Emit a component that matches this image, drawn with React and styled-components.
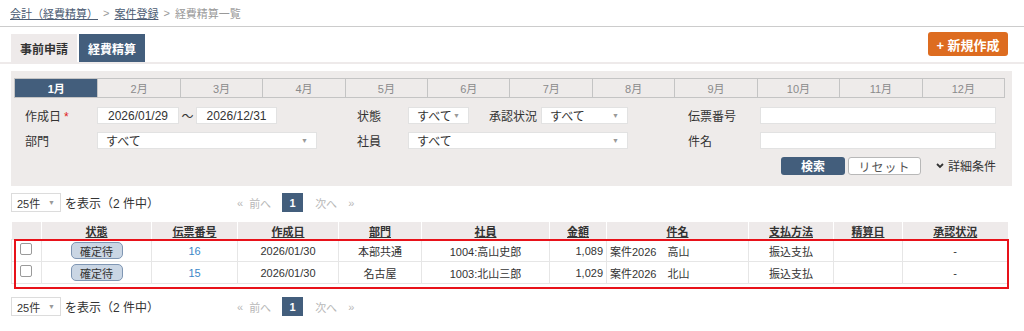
import styled, { createGlobalStyle } from "styled-components";

const GlobalStyle = createGlobalStyle`
  body {
    margin: 0;
    background: #ffffff;
    font-family: "Liberation Sans", "Noto Sans CJK JP", sans-serif;
    font-size: 12px;
    color: #333333;
  }
`;

const Page = styled.div`
  width: 1024px;
`;

const Breadcrumb = styled.div`
  height: 26px;
  padding: 0 10px;
  display: flex;
  align-items: center;
  gap: 5px;
  font-size: 11px;
  color: #999999;
  border-bottom: 1px solid #cccccc;
`;

const Crumb = styled.a`
  color: #4c5c73;
  text-decoration: underline;
`;

const TabBar = styled.div`
  margin-top: 7px;
  padding: 0 16px 0 11px;
  display: flex;
  align-items: flex-end;
  height: 28px;
  border-bottom: 2px solid #eeeaea;
`;

const Tab = styled.div`
  width: 66px;
  height: 28px;
  margin-right: 2px;
  display: flex;
  align-items: center;
  justify-content: center;
  font-weight: bold;
  font-size: 12px;
  background: ${(p) => (p.$active ? "#435e7c" : "#eeeaea")};
  color: ${(p) => (p.$active ? "#ffffff" : "#333333")};
`;

const NewButton = styled.button`
  margin-left: auto;
  align-self: flex-start;
  margin-top: -2px;
  width: 80px;
  height: 24px;
  border: none;
  border-radius: 3px;
  background: #dd6c20;
  color: #ffffff;
  font-weight: bold;
  font-size: 13px;
  font-family: inherit;
`;

const Panel = styled.div`
  margin: 7px 12px 0 11px;
  background: #eeebea;
  padding: 7px 7px 12px 3px;
`;

const MonthRow = styled.div`
  display: grid;
  grid-template-columns: repeat(12, 1fr);
  border: 1px solid #c4c4c4;
  height: 18px;
`;

const Month = styled.div`
  display: flex;
  align-items: center;
  justify-content: center;
  font-size: 11px;
  border-left: ${(p) => (p.$first ? "none" : "1px solid #c4c4c4")};
  background: ${(p) => (p.$active ? "#435e7c" : "transparent")};
  color: ${(p) => (p.$active ? "#ffffff" : "#8a8a8a")};
  font-weight: ${(p) => (p.$active ? "bold" : "normal")};
`;

const FormGrid = styled.div`
  margin-top: 9px;
  padding-left: 11px;
  display: grid;
  grid-template-columns: 72px 260px 51px 220px 60px 72px 236px;
  grid-auto-rows: 17px;
  row-gap: 8px;
  align-items: center;
`;

const Label = styled.div`
  font-size: 12px;
  color: #333333;
`;

const Required = styled.span`
  color: #e02020;
  margin-left: 3px;
`;

const Field = styled.div`
  display: flex;
  align-items: center;
`;

const Input = styled.div`
  box-sizing: border-box;
  width: ${(p) => p.$w}px;
  height: 17px;
  background: #ffffff;
  border: 1px solid #e2e2e2;
  display: flex;
  align-items: center;
  justify-content: center;
  font-size: 12px;
  color: #333333;
`;

const Tilde = styled.span`
  width: 17px;
  text-align: center;
  font-size: 12px;
`;

const Select = styled.div`
  box-sizing: border-box;
  width: ${(p) => p.$w}px;
  height: 17px;
  background: #ffffff;
  border: 1px solid #e2e2e2;
  display: flex;
  align-items: center;
  padding: 0 8px;
  font-size: 12px;
  color: #333333;
  &::after {
    content: "▼";
    margin-left: auto;
    font-size: 7px;
    color: #999999;
  }
`;

const InlineLabel = styled(Label)`
  margin: 0 0 0 20px;
  width: 52px;
`;

const ActionRow = styled.div`
  grid-column: 1 / -1;
  display: flex;
  align-items: center;
  justify-content: flex-end;
`;

const SearchButton = styled.button`
  width: 64px;
  height: 18px;
  border: none;
  border-radius: 3px;
  background: #435e7c;
  color: #ffffff;
  font-weight: bold;
  font-size: 12px;
  font-family: inherit;
  padding: 0;
`;

const ResetButton = styled.button`
  margin-left: 3px;
  width: 73px;
  height: 18px;
  border: 1px solid #b8b8b8;
  border-radius: 3px;
  background: #ffffff;
  color: #555555;
  font-size: 12px;
  font-family: inherit;
  letter-spacing: 1px;
  padding: 0;
`;

const Detail = styled.div`
  margin-left: 15px;
  display: flex;
  align-items: center;
  gap: 4px;
  font-size: 12px;
  color: #333333;
`;

const Pager = styled.div`
  display: grid;
  grid-template-columns: 226px auto;
  align-items: center;
  padding-left: 11px;
  height: 19px;
  margin-top: ${(p) => p.$top}px;
`;

const PageSize = styled.div`
  display: flex;
  align-items: center;
  gap: 4px;
  font-size: 12px;
`;

const SizeSelect = styled.div`
  box-sizing: border-box;
  width: 50px;
  height: 19px;
  border: 1px solid #dcdcdc;
  display: flex;
  align-items: center;
  padding: 0 5px;
  font-size: 11px;
  &::after {
    content: "▼";
    margin-left: auto;
    font-size: 7px;
    color: #999999;
  }
`;

const PageLinks = styled.div`
  display: flex;
  align-items: center;
  font-size: 11px;
  color: #b8b8b8;
`;

const PageLink = styled.span`
  margin-right: ${(p) => p.$gap}px;
`;

const PageNum = styled.span`
  width: 21px;
  height: 19px;
  display: flex;
  align-items: center;
  justify-content: center;
  background: #435e7c;
  color: #ffffff;
  font-weight: bold;
  margin-right: 12px;
`;

const TableWrap = styled.div`
  position: relative;
  margin: 10px 0 0 11px;
  width: 996px;
`;

const Table = styled.table`
  border-collapse: collapse;
  width: 996px;
  table-layout: fixed;
  font-size: 11px;
`;

const Th = styled.th`
  height: 17px;
  padding: 0;
  background: #eeeaea;
  border-left: 1px solid #ffffff;
  font-weight: bold;
  text-decoration: underline;
  color: #333333;
  &:first-child {
    border-left: none;
  }
`;

const Td = styled.td`
  height: 21px;
  padding: 0 3px;
  border: 1px solid #e6e6e6;
  text-align: ${(p) => p.$align || "center"};
  color: ${(p) => (p.$link ? "#3a87c8" : "#333333")};
  vertical-align: middle;
`;

const Check = styled.span`
  display: block;
  width: 10px;
  height: 10px;
  border: 1px solid #9a9a9a;
  border-radius: 2px;
  background: #ffffff;
  margin: -4px 0 0 5px;
`;

const Badge = styled.span`
  display: inline-flex;
  align-items: center;
  justify-content: center;
  width: 50px;
  height: 15px;
  border: 1px solid #7f96b3;
  border-radius: 5px;
  background: #cad6e4;
  color: #333333;
  font-size: 11px;
`;

const Highlight = styled.div`
  position: absolute;
  left: 3px;
  top: 17px;
  width: 995px;
  height: 50px;
  box-sizing: border-box;
  border: 2px solid #e8121a;
  pointer-events: none;
`;

const months = ["1月", "2月", "3月", "4月", "5月", "6月", "7月", "8月", "9月", "10月", "11月", "12月"];

const columns = [
  { label: "", w: 30 },
  { label: "状態", w: 110 },
  { label: "伝票番号", w: 86 },
  { label: "作成日", w: 101 },
  { label: "部門", w: 83 },
  { label: "社員", w: 128 },
  { label: "金額", w: 57 },
  { label: "件名", w: 142 },
  { label: "支払方法", w: 85 },
  { label: "精算日", w: 69 },
  { label: "承認状況", w: 105 },
];

const rows = [
  { no: "16", date: "2026/01/30", dept: "本部共通", emp: "1004:高山史郎", amount: "1,089", title: "案件2026　高山" },
  { no: "15", date: "2026/01/30", dept: "名古屋", emp: "1003:北山三郎", amount: "1,029", title: "案件2026　北山" },
];

const PagerBar = ({ top }) => (
  <Pager $top={top}>
    <PageSize>
      <SizeSelect>25件</SizeSelect>
      を表示（2 件中）
    </PageSize>
    <PageLinks>
      <PageLink $gap={6}>«</PageLink>
      <PageLink $gap={11}>前へ</PageLink>
      <PageNum>1</PageNum>
      <PageLink $gap={11}>次へ</PageLink>
      <PageLink $gap={0}>»</PageLink>
    </PageLinks>
  </Pager>
);

const App = () => {
  return (
    <Page>
      <GlobalStyle />
      <Breadcrumb>
        <Crumb>会計（経費精算）</Crumb>
        <span>&gt;</span>
        <Crumb>案件登録</Crumb>
        <span>&gt;</span>
        <span>経費精算一覧</span>
      </Breadcrumb>

      <TabBar>
        <Tab>事前申請</Tab>
        <Tab $active>経費精算</Tab>
        <NewButton>+ 新規作成</NewButton>
      </TabBar>

      <Panel>
        <MonthRow>
          {months.map((m, i) => (
            <Month key={m} $first={i === 0} $active={i === 0}>
              {m}
            </Month>
          ))}
        </MonthRow>

        <FormGrid>
          <Label>
            作成日<Required>*</Required>
          </Label>
          <Field>
            <Input $w={82}>2026/01/29</Input>
            <Tilde>〜</Tilde>
            <Input $w={81}>2026/12/31</Input>
          </Field>
          <Label>状態</Label>
          <Field>
            <Select $w={61}>すべて</Select>
            <InlineLabel>承認状況</InlineLabel>
            <Select $w={87}>すべて</Select>
          </Field>
          <div />
          <Label>伝票番号</Label>
          <Input $w={236} />

          <Label>部門</Label>
          <Select $w={220}>すべて</Select>
          <Label>社員</Label>
          <Select $w={220}>すべて</Select>
          <div />
          <Label>件名</Label>
          <Input $w={236} />

          <ActionRow>
            <SearchButton>検索</SearchButton>
            <ResetButton>リセット</ResetButton>
            <Detail>
              <svg width="8" height="6" viewBox="0 0 8 6">
                <path d="M1 1 L4 4 L7 1" stroke="#333" strokeWidth="1.8" fill="none" />
              </svg>
              詳細条件
            </Detail>
          </ActionRow>
        </FormGrid>
      </Panel>

      <PagerBar top={7} />

      <TableWrap>
        <Table>
          <colgroup>
            {columns.map((c, i) => (
              <col key={i} style={{ width: c.w }} />
            ))}
          </colgroup>
          <thead>
            <tr>
              {columns.map((c, i) => (
                <Th key={i}>{c.label}</Th>
              ))}
            </tr>
          </thead>
          <tbody>
            {rows.map((r) => (
              <tr key={r.no}>
                <Td $align="left">
                  <Check />
                </Td>
                <Td>
                  <Badge>確定待</Badge>
                </Td>
                <Td $link>{r.no}</Td>
                <Td>{r.date}</Td>
                <Td>{r.dept}</Td>
                <Td>{r.emp}</Td>
                <Td $align="right">{r.amount}</Td>
                <Td $align="left">{r.title}</Td>
                <Td>振込支払</Td>
                <Td />
                <Td>-</Td>
              </tr>
            ))}
          </tbody>
        </Table>
        <Highlight />
      </TableWrap>

      <PagerBar top={13} />
    </Page>
  );
};

export default App;
